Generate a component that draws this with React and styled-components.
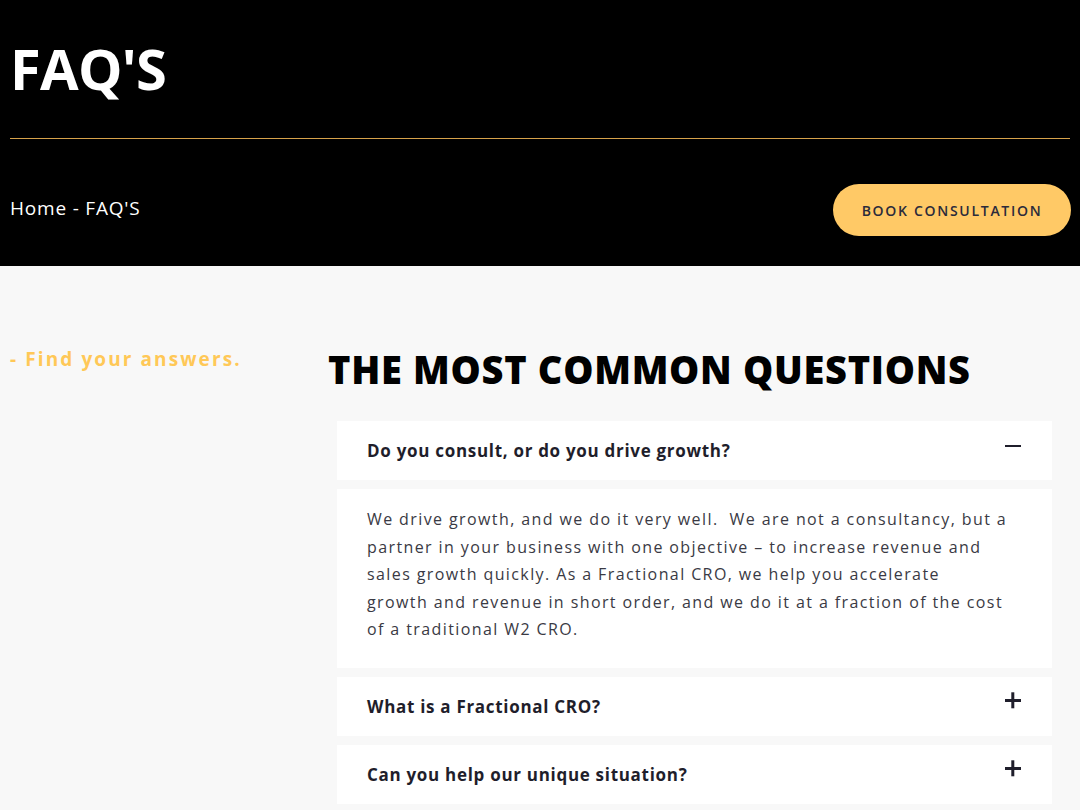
import React, { useState } from "react";
import styled, { createGlobalStyle } from "styled-components";

const Global = createGlobalStyle`
  html, body { margin: 0; padding: 0; }
  body { background: #f8f8f8; font-family: "Open Sans", "Liberation Sans", sans-serif; }
  * { box-sizing: border-box; }
`;

const Hero = styled.header`
  background: #000;
  height: 266px;
  padding: 0 10px;
  display: flex;
  flex-direction: column;
`;

const Title = styled.h1`
  margin: 0;
  height: 139px;
  display: flex;
  align-items: center;
  padding-bottom: 2px;
  color: #fff;
  font-size: 56px;
  font-weight: 700;
  letter-spacing: -0.7px;
  border-bottom: 1px solid #d6a24a;
`;

const BarRow = styled.div`
  flex: 1;
  display: flex;
  align-items: center;
  justify-content: space-between;
  padding-top: 15px;
`;

const Crumbs = styled.div`
  color: #fff;
  font-size: 19px;
  font-weight: 400;
  letter-spacing: 0.8px;
  margin-top: -4px;
`;

const CTA = styled.button`
  height: 52px;
  width: 238px;
  margin-right: -1px;
  border: none;
  border-radius: 26px;
  background: #ffc966;
  color: #2b2b3b;
  font-family: inherit;
  font-size: 14px;
  font-weight: 600;
  letter-spacing: 1.7px;
`;

const Main = styled.main`
  display: grid;
  grid-template-columns: 318px 1fr;
  padding: 79px 10px 0;
`;

const Eyebrow = styled.div`
  color: #ffc857;
  font-size: 19px;
  font-weight: 700;
  letter-spacing: 2.1px;
  padding-top: 1px;
`;

const Heading = styled.h2`
  margin: 0 0 27px;
  color: #000;
  font-size: 38px;
  font-weight: 800;
  letter-spacing: 0.7px;
  line-height: 1.3;
`;

const List = styled.div`
  display: flex;
  flex-direction: column;
  gap: 9px;
  margin-left: 9px;
  width: 715px;
`;

const Item = styled.div`
  display: flex;
  flex-direction: column;
  gap: 9px;
`;

const Question = styled.button`
  height: 59px;
  padding: 0 30px;
  border: none;
  background: #fff;
  display: flex;
  align-items: center;
  justify-content: space-between;
  font-family: inherit;
  font-size: 17px;
  font-weight: 700;
  letter-spacing: 0.7px;
  color: #1f1e2b;
  text-align: left;
  cursor: pointer;
`;

const Icon = styled.span`
  width: 16px;
  height: 16px;
  position: relative;
  margin-right: 1px;
  margin-top: ${(p) => (p.$open ? "-10px" : "-12px")};
  &::before, &::after {
    content: "";
    position: absolute;
    background: #1f1e2b;
    left: 0;
    top: 7px;
    width: 16px;
    height: 2.6px;
  }
  &::after {
    display: ${(p) => (p.$open ? "none" : "block")};
    transform: rotate(90deg);
  }
`;

const Answer = styled.div`
  background: #fff;
  padding: 17px 30px 24px;
  font-size: 16px;
  line-height: 27.5px;
  letter-spacing: 1.4px;
  color: #3a3a44;
  white-space: nowrap;
`;

const faqs = [
  {
    q: "Do you consult, or do you drive growth?",
    a: [
      "We drive growth, and we do it very well.\u00a0 We are not a consultancy, but a",
      "partner in your business with one objective \u2013 to increase revenue and",
      "sales growth quickly. As a Fractional CRO, we help you accelerate",
      "growth and revenue in short order, and we do it at a fraction of the cost",
      "of a traditional W2 CRO.",
    ],
  },
  { q: "What is a Fractional CRO?", a: [] },
  { q: "Can you help our unique situation?", a: [] },
];

export default function App() {
  const [open, setOpen] = useState(0);
  return (
    <>
      <Global />
      <Hero>
        <Title>FAQ'S</Title>
        <BarRow>
          <Crumbs>Home - FAQ'S</Crumbs>
          <CTA>BOOK CONSULTATION</CTA>
        </BarRow>
      </Hero>
      <Main>
        <Eyebrow>- Find your answers.</Eyebrow>
        <div>
          <Heading>THE MOST COMMON QUESTIONS</Heading>
          <List>
            {faqs.map((f, i) => (
              <Item key={i}>
                <Question onClick={() => setOpen(open === i ? -1 : i)}>
                  {f.q}
                  <Icon $open={open === i} />
                </Question>
                {open === i && (
                  <Answer>
                    {f.a.map((line, j) => (
                      <React.Fragment key={j}>
                        {line}
                        {j < f.a.length - 1 && <br />}
                      </React.Fragment>
                    ))}
                  </Answer>
                )}
              </Item>
            ))}
          </List>
        </div>
      </Main>
    </>
  );
}
